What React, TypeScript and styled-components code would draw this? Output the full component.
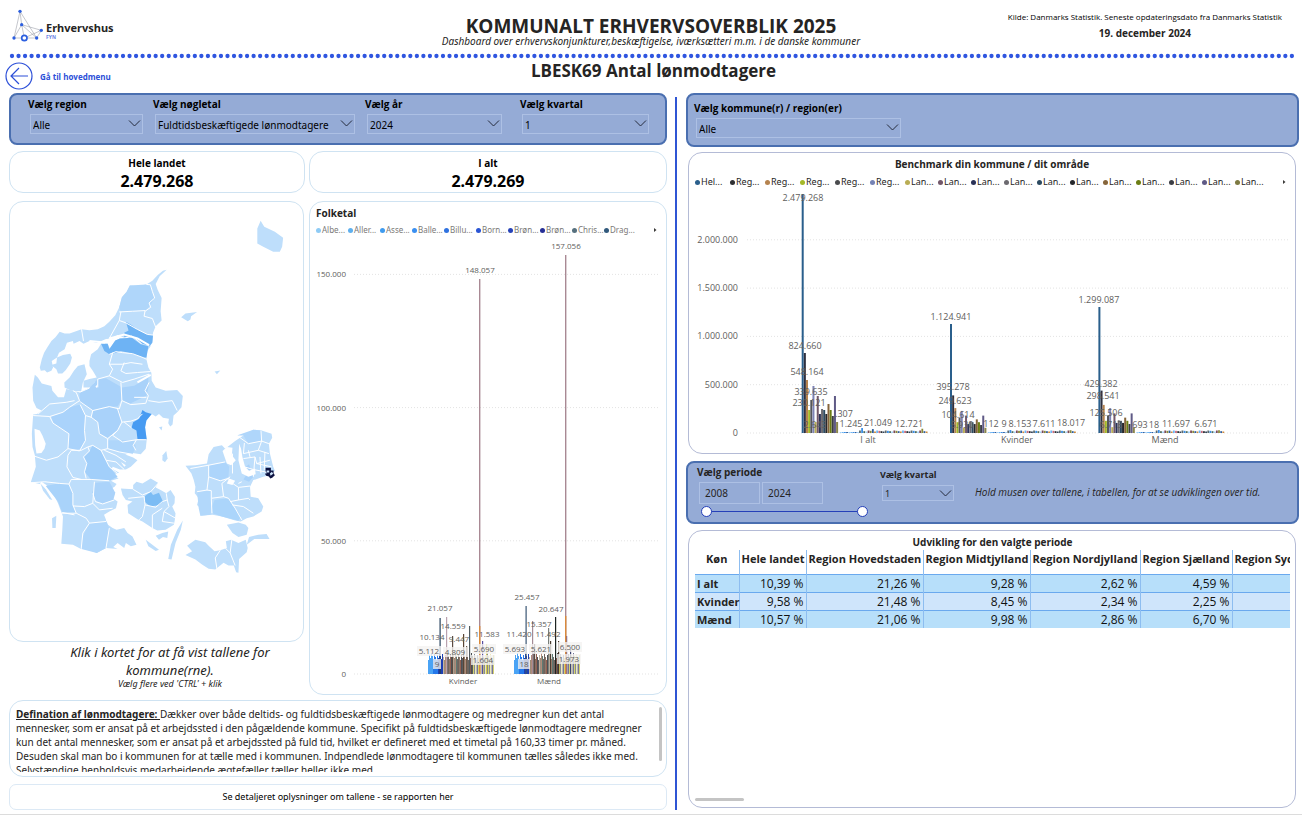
import React from "react";
import styled, { createGlobalStyle } from "styled-components";

const Global = createGlobalStyle`
  *, *::before, *::after { box-sizing: border-box; }
  body {
    margin: 0;
    background: #fff;
    color: #252423;
    font-family: "Noto Sans", "Open Sans", sans-serif;
    font-size: 10px;
  }
  h1, h2, h3, p { margin: 0; }
  button, input, select { font-family: inherit; color: inherit; }
`;

const Page = styled.div`
  min-width: 1100px;
  border-bottom: 1px solid #dcdcdc;
  padding-bottom: 4px;
`;

const Header = styled.header`
  display: grid;
  grid-template-columns: 1fr auto 1fr;
  height: 52px;
`;

const Brand = styled.div`
  display: flex;
  align-items: flex-start;
  gap: 2px;
  padding: 9px 0 0 12px;
`;

const BrandName = styled.div`
  padding-top: 12px;
  font-size: 11px;
  line-height: 14px;
  font-weight: 700;
`;

const BrandArea = styled.div`
  font-size: 5px;
  line-height: 5px;
  font-weight: 700;
  color: #6a83e6;
`;

const Headline = styled.div`
  padding-top: 16px;
  text-align: center;
`;

const Title = styled.h1`
  font-family: "Open Sans", sans-serif;
  font-size: 19px;
  line-height: 20px;
  font-weight: 700;
`;

const Tagline = styled.p`
  font-size: 10px;
  line-height: 10px;
  font-style: italic;
`;

const Source = styled.div`
  justify-self: end;
  padding: 10px 20px 0 0;
  text-align: center;
  font-family: "Open Sans", sans-serif;
  font-size: 8px;
  line-height: 14px;
  color: #000;
`;

const SourceDate = styled.div`
  font-size: 10px;
  line-height: 18px;
  font-weight: 700;
  color: #252423;
`;

const DotRule = styled.svg`
  display: block;
  width: 100%;
  height: 8px;
`;

const SubHeader = styled.div`
  display: grid;
  grid-template-columns: 1fr auto 1fr;
  height: 33px;
  padding: 1px 0 0 5px;
`;

const BackLink = styled.a`
  display: flex;
  align-items: center;
  gap: 7px;
  height: 30px;
  color: #2c4fd8;
  font-family: "Open Sans", sans-serif;
  font-size: 8px;
  font-weight: 700;
  text-decoration: none;
`;

const PageTitle = styled.h2`
  font-family: "Open Sans", sans-serif;
  font-size: 17px;
  line-height: 20px;
  font-weight: 700;
`;

const Main = styled.main`
  display: grid;
  grid-template-columns: minmax(0, 658fr) 2px minmax(0, 614fr);
  column-gap: 8px;
  padding: 0 3px 0 9px;
`;

const Divider = styled.div`
  margin-top: 4px;
  background: #2f55d4;
`;

const Column = styled.div`
  display: flex;
  flex-direction: column;
`;

const RightColumn = styled(Column)`
  padding-left: 1px;
`;

const FilterBar = styled.section<{ $height: number }>`
  display: flex;
  min-height: ${(p) => p.$height}px;
  border: 2px solid #4a6fb0;
  border-radius: 8px;
  background: #95abd6;
  color: #000;
`;

const Field = styled.div`
  display: flex;
  flex-direction: column;
  align-items: flex-start;
`;

const LeftFilters = styled(FilterBar)`
  display: grid;
  grid-template-columns: 125fr 212fr 155fr 129fr;
  padding: 1px 16px 0 17px;

  ${Field} { padding-right: 12px; }
  ${Field}:nth-child(3) { padding-right: 20px; }
  ${Field}:nth-child(4) { padding-right: 2px; }
`;

const Label = styled.label<{ $size?: number }>`
  font-family: "Open Sans", sans-serif;
  font-size: ${(p) => p.$size ?? 10}px;
  line-height: 16px;
  font-weight: 700;
`;

const SelectBox = styled.div<{ $width?: number; $small?: boolean }>`
  position: relative;
  width: ${(p) => (p.$width ? p.$width + "px" : "100%")};
  height: ${(p) => (p.$small ? 16 : 20)}px;
  margin: 2px 0 0 2px;
  border: 1px solid #adc0e4;

  svg {
    position: absolute;
    right: 1px;
    top: ${(p) => (p.$small ? 3 : 4)}px;
    pointer-events: none;
  }
`;

const Select = styled.select<{ $small?: boolean }>`
  display: block;
  width: 100%;
  height: 100%;
  padding: 1px 15px 0 2px;
  border: 0;
  appearance: none;
  background: transparent;
  font-size: ${(p) => (p.$small ? 9 : 10)}px;
`;

const Card = styled.section<{ $tone?: string }>`
  border: 1px solid ${(p) => p.$tone ?? "#cfe3f2"};
  border-radius: 14px;
  background: #fff;
`;

const KpiRow = styled.div`
  display: grid;
  grid-template-columns: 296fr 358fr;
  gap: 4px;
  margin-top: 6px;
`;

const Kpi = styled(Card)`
  height: 42px;
  padding-top: 4px;
  text-align: center;
  color: #000;
`;

const KpiName = styled.h3`
  font-family: "Open Sans", sans-serif;
  font-size: 10px;
  line-height: 15px;
  font-weight: 700;
`;

const KpiValue = styled.div`
  font-size: 16px;
  line-height: 20px;
  font-weight: 700;
`;

const Visuals = styled.div`
  display: grid;
  grid-template-columns: 296fr 358fr;
  gap: 4px;
  margin-top: 8px;
`;

const MapCard = styled(Card)`
  height: 441px;
  margin-right: 1px;
  overflow: hidden;

  svg { display: block; width: 100%; }
`;

const MapHint = styled.p`
  padding: 1px 0 0 26px;
  text-align: center;
  font-size: 13px;
  line-height: 18px;
  font-style: italic;

  small {
    display: block;
    font-size: 9px;
    line-height: 9px;
  }
`;

const ChartCard = styled(Card)`
  overflow: hidden;

  & > svg { display: block; width: 100%; }
`;

const ChartTitle = styled.h3<{ $center?: boolean }>`
  padding: ${(p) => (p.$center ? "3px 0 0" : "3px 0 0 6px")};
  text-align: ${(p) => (p.$center ? "center" : "left")};
  font-family: "Open Sans", sans-serif;
  font-size: 10px;
  line-height: 16px;
  font-weight: 700;
`;

const Legend = styled.ul<{ $tone: string; $size: number }>`
  display: flex;
  margin: 0;
  padding: 1px 8px 0 6px;
  list-style: none;
  color: ${(p) => p.$tone};
  font-size: ${(p) => p.$size}px;
  line-height: 16px;
`;

const LegendItem = styled.li<{ $width: number }>`
  display: flex;
  align-items: center;
  gap: 1px;
  width: ${(p) => p.$width}px;
  white-space: nowrap;
`;

const Dot = styled.span<{ $color: string }>`
  flex: none;
  width: 5px;
  height: 5px;
  border-radius: 50%;
  background: ${(p) => p.$color};
`;

const LegendNext = styled.button`
  display: flex;
  align-items: center;
  margin-left: auto;
  padding: 0;
  border: 0;
  background: none;
`;

const Definition = styled(Card)`
  height: 77px;
  margin-top: 5px;
  padding: 6px 4px 4px 6px;
`;

const DefinitionScroll = styled.div`
  display: flex;
  height: 65px;
  overflow: hidden;
  font-size: 10px;
  line-height: 14px;

  p { flex: 1; }
`;

const ScrollThumb = styled.div`
  flex: none;
  width: 3px;
  height: 54px;
  border-radius: 2px;
  background: #c4c4c4;
`;

const ReportLink = styled.a`
  display: block;
  margin-top: 7px;
  border: 1px solid #dce9f5;
  border-radius: 7px;
  text-align: center;
  font-size: 9px;
  line-height: 24px;
  color: #000;
  text-decoration: none;
`;

const RightFilter = styled(FilterBar)`
  padding: 5px 6px;
`;

const BenchmarkCard = styled(ChartCard)`
  margin: 5px 3px 0 2px;

  ${Legend} { padding-top: 2px; }
`;

const PeriodFilter = styled(FilterBar)`
  margin-top: 7px;
  padding: 1px 9px;
  color: #252423;
`;

const PeriodField = styled(Field)`
  width: 183px;
`;

const YearRow = styled.div`
  display: flex;
  gap: 2px;
  margin: 2px 0 0 2px;
`;

const YearInput = styled.input`
  width: 61px;
  height: 22px;
  padding: 0 5px;
  border: 1px solid #adc0e4;
  background: transparent;
  font-size: 10px;
`;

const SliderTrack = styled.div`
  position: relative;
  width: 170px;
  height: 14px;
  background: linear-gradient(#2540b8, #2540b8) 6px 7px / 156px 1px no-repeat;
`;

const SliderInput = styled.input`
  position: absolute;
  left: 4px;
  top: 2px;
  width: 167px;
  height: 11px;
  margin: 0;
  appearance: none;
  background: transparent;
  pointer-events: none;

  &::-webkit-slider-thumb {
    appearance: none;
    width: 11px;
    height: 11px;
    border: 1px solid #2540b8;
    border-radius: 50%;
    background: #fff;
    pointer-events: auto;
  }
`;

const QuarterField = styled(Field)`
  width: 95px;
  padding-top: 3px;
`;

const PeriodHint = styled.p`
  padding-top: 20px;
  font-family: "Open Sans", sans-serif;
  font-size: 10px;
  line-height: 16px;
  font-style: italic;
`;

const TableCard = styled(ChartCard)`
  flex: 1;
  display: flex;
  flex-direction: column;
  margin: 6px 3px 2px 2px;
  padding: 0 5px 6px 6px;
`;

const TableScroll = styled.div`
  flex: 1;
  overflow: hidden;
`;

const Table = styled.table`
  border-collapse: collapse;
  table-layout: fixed;
  width: 649px;
  font-family: "Open Sans", sans-serif;
  font-size: 12px;

  th, td {
    padding: 0 2px;
    white-space: nowrap;
    border-left: 1px solid #8dbdf0;
  }
  th:first-child { border-left: 0; }
  thead th {
    height: 24px;
    padding-bottom: 6px;
    font-size: 11px;
  }
  tbody tr { height: 18px; background: #b7dffa; border-top: 1px solid #6aa9ee; }
  tbody tr:nth-child(2) { background: #cfe5fb; }
  tbody th { text-align: left; font-size: 11px; }
  tbody td { text-align: right; color: #111; }
`;

const ScrollBar = styled.div`
  width: 49px;
  height: 3px;
  border-radius: 2px;
  background: #c4c4c4;
`;

const Chevron = () => (
  <svg width="13" height="9" viewBox="0 0 13 9" fill="none" stroke="#252b3d">
    <path d="M1 1.5 6.500 7 12 1.500" />
  </svg>
);

const NextArrow = () => (
  <svg width="4" height="6" viewBox="0 0 4 6">
    <path d="M0 1 2.500 3 0 5z" fill="#3b3a39" />
  </svg>
);

type PickerProps = { id: string; label: string; value: string; width?: number; small?: boolean };

const Picker = ({ id, label, value, width, small }: PickerProps) => (
  <>
    <Label htmlFor={id} $size={small ? 9 : 10}>{label}</Label>
    <SelectBox $width={width} $small={small}>
      <Select id={id} defaultValue={value} $small={small}>
        <option>{value}</option>
      </Select>
      <Chevron />
    </SelectBox>
  </>
);

const Logo = () => (
  <svg width="32" height="34" viewBox="0 0 96 102">
    <g fill="none" stroke="#8a8f9a" strokeWidth="1.500">
      <path d="M24 7 6 87H74L24 7 29 47 6 87M29 47 74 87 88 64 29 47 37 87 88 64" />
    </g>
    <g fill="#2c5fe0">
      <circle cx="24" cy="7" r="5" />
      <circle cx="29" cy="47" r="5" />
      <circle cx="6" cy="87" r="5" />
      <circle cx="74" cy="87" r="5" />
      <circle cx="88" cy="64" r="5" />
    </g>
    <circle cx="37" cy="87" r="8" fill="#fff" stroke="#2c5fe0" strokeWidth="5" />
  </svg>
);

const BackIcon = () => (
  <svg width="28" height="28" viewBox="0 0 28 28" fill="none" stroke="#2c4fd8" strokeWidth="1.200">
    <circle cx="14" cy="14" r="13" />
    <path d="M23 14H6M14 6 6 14l8 8" />
  </svg>
);

/* ---------- Map of Denmark ---------- */

const land = [
  "M473 205 462 208 447 220 430 238 412 249 385 254 362 252 352 272 338 288 330 318 318 342 300 362 285 375 265 384 240 387 216 384 195 392 180 397 165 397 150 392 138 408 125 420 112 440 103 455 96 475 90 500 93 510 105 508 112 515 125 510 130 500 126 480 142 470 148 455 165 445 172 425 190 420 192 428 210 420 222 428 240 420 262 426 290 414 310 412 325 402 345 410 368 403 385 415 400 430 425 434 430 420 432 395 440 375 458 358 455 330 458 290 446 265 440 248 452 224Z",
  "M275 428 295 428 302 444 318 418 332 412 350 412 368 405 395 428 425 435 415 450 412 475 418 500 427 516 428 540 440 560 470 570 505 568 522 586 518 620 505 635 494 645 491 672 484 678 478 668 480 655 462 652 450 640 440 648 428 640 412 660 408 680 413 718 410 745 395 762 370 758 348 763 372 772 385 780 365 800 350 808 332 808 310 800 308 806 330 818 310 823 328 835 305 842 322 852 316 860 298 870 318 878 310 895 325 905 320 925 300 935 284 945 296 975 310 985 322 990 345 985 355 1000 370 1010 382 1035 365 1040 350 1030 345 1045 325 1030 312 1042 325 1048 290 1045 262 1060 240 1050 213 1047 190 1035 155 1032 158 990 160 950 145 910 130 880 110 855 95 845 90 852 63 846 78 800 75 765 68 740 66 700 70 642 82 640 95 630 80 622 70 600 68 560 75 522 84 530 96 548 125 556 128 570 145 590 163 590 170 565 190 570 210 575 240 562 265 568 268 548 255 545 245 560 222 560 222 540 240 535 262 530 250 510 240 495 240 480 245 460 265 445Z",
  "M164 545 180 530 193 510 205 495 225 490 232 520 220 545 215 572 185 570 165 560Z",
  "M124 492 140 488 142 470 160 462 182 458 187 470 182 488 168 508 158 518 145 518 140 505Z",
  "M335 865 372 868 372 855 382 845 400 850 425 835 447 848 440 862 455 870 472 880 485 870 498 890 497 910 490 920 500 940 498 960 495 975 470 990 445 992 430 985 400 965 385 958 357 940 355 915 370 905 350 900 340 885Z",
  "M522 962 516 990 500 1030 488 1080 478 1078 486 1035 505 990Z",
  "M410 1020 430 1035 450 1050 440 1054 418 1040Z",
  "M440 1008 460 1000 478 995 475 1015 462 1012 450 1020Z",
  "M461 765 472 752 476 775 468 786 460 780Z",
  "M530 797 560 795 595 790 600 762 615 740 640 735 650 745 680 722 705 705 735 688 760 690 790 700 792 712 782 730 785 760 795 800 800 812 785 825 765 830 735 840 725 860 727 890 750 895 765 920 760 935 735 950 715 955 697 965 680 962 640 950 612 945 575 948 580 930 565 915 570 895 558 880 560 860 555 840 548 820Z",
  "M655 975 690 968 712 975 720 985 715 1005 690 1012 672 1000Z",
  "M530 1066 550 1055 535 1038 560 1020 590 1028 600 1038 618 1055 635 1052 655 1045 652 1025 668 1020 690 1030 712 1020 718 1045 715 1058 692 1078 690 1120 683 1118 676 1098 660 1098 645 1090 620 1110 600 1108 580 1095 560 1080Z",
  "M715 1035 722 1012 750 1005 775 1003 784 1018 760 1018 738 1018Z",
  "M757 57 768 75 800 90 825 108 822 135 815 150 795 150 765 135 747 125 747 80Z",
  "M517 348 530 337 565 332 547 345 545 355 537 360Z",
  "M618 512 635 509 625 520Z",
  "M127 955 140 948 138 985 128 985Z",
  "M92 850 108 868 128 900 120 898 100 872Z",
  "M450 680 460 678 458 690Z",
];

const fills: [string, string][] = [
  ["#afd6fa", "M362 252 412 249 424 250 430 270 437 290 425 310 408 330 370 330 335 332 330 318 338 288 352 272Z"],
  ["#6eb3f4", "M350 362 368 372 385 385 415 400 432 402 430 425 422 434 400 428 382 412 368 403 345 408 345 395 358 388Z"],
  ["#6eb3f4", "M275 428 295 428 300 444 318 418 332 412 368 410 395 430 418 436 412 470 402 470 370 458 335 450 320 455 300 460 285 450Z"],
  ["#a9d2fa", "M210 575 240 562 265 535 290 532 335 558 338 595 325 618 285 620 250 630 210 605Z"],
  ["#a9d2fa", "M338 560 375 555 418 530 418 560 412 585 360 610 338 600Z"],
  ["#aad3fb", "M125 648 160 635 180 620 212 612 228 645 225 690 228 720 210 752 175 745 178 700 130 668Z"],
  ["#a9d2fa", "M250 630 300 618 330 625 337 660 325 690 295 712 270 700 265 665 245 650Z"],
  ["#479bf2", "M400 628 410 635 428 640 412 660 408 680 413 718 385 716 382 690 367 682 372 665 390 655Z"],
  ["#afd6fb", "M295 720 340 720 375 722 380 740 370 762 330 755 295 745Z"],
  ["#a2cffa", "M250 735 275 750 290 780 300 800 325 830 300 842 245 838 225 815 232 790 222 770 240 752Z"],
  ["#a9d3fa", "M108 858 145 850 178 852 190 880 190 915 200 940 158 938 145 905Z"],
  ["#abd3fa", "M258 848 300 845 318 878 312 900 280 912 255 900 248 880Z"],
  ["#b1d7fb", "M240 970 290 965 300 985 290 1045 262 1060 213 1047 220 1010Z"],
  ["#7cbcf4", "M408 888 425 875 432 885 450 878 462 905 450 915 425 920 405 905Z"],
  ["#b2d8fb", "M565 875 608 872 610 925 605 945 575 948 570 925Z"],
  ["#abd5fb", "M618 900 660 895 680 925 698 950 690 963 640 950 612 940 608 925Z"],
  ["#add5fb", "M600 795 650 785 662 800 660 830 635 842 600 830Z"],
  ["#a9d2fa", "M712 800 722 792 735 830 722 845 705 838 715 822Z"],
  ["#afd6fb", "M685 705 735 688 760 690 758 722 720 730 705 705Z"],
];

const borders =
  "M412 249 424 250 430 270 437 290 420 305 425 318 408 330M330 332 370 330 408 328 405 345 430 352 440 378M335 332 330 358 350 365 385 385 415 400 432 402M216 384 222 420M330 358 300 412" +
  "M300 460 320 452 340 455 370 458 402 470 412 475M310 455 300 490 310 505 300 525M300 490 340 490 365 485 400 490M345 485 335 510 350 518 385 515 425 512M300 525 265 535 265 560M300 525 340 545 375 535 420 520M335 545 338 600 365 612 410 608 418 585 408 570 420 545M375 590 412 590M418 600 450 605 490 600 505 630" +
  "M190 570 200 575 210 600 180 620 160 635 120 648 70 645M210 575 240 562M210 602 250 630 300 618 330 625 338 600M212 612 228 645 225 690 228 720 210 752 175 745 178 700 130 668 120 648M85 640 120 610 170 605 195 600" +
  "M228 645 245 650 265 665 270 700 295 715M250 630 245 650M325 625 338 665 365 662 385 655 400 640M338 665 325 690 295 715 295 745 330 755 370 762M367 682 345 665M325 690 310 705 340 725 382 718 413 718M382 718 372 735 380 750" +
  "M66 765 110 780 145 770 175 745M175 765 185 750 215 750 235 740 250 735 275 750 295 745M175 765 172 800 190 832 215 838M235 740 240 752 222 770 232 790 225 815 230 835M275 750 290 780 320 785 345 808M285 750 320 765 350 785M290 780 300 800 325 820" +
  "M65 848 105 845 150 850 178 852 185 838 245 838 300 842M178 852 190 880 190 915 200 940 155 940M190 918 225 920 250 910 255 845M250 880 258 905 280 912 315 900M200 940 230 955 240 970 290 965 300 950M158 938 195 945M240 970 220 1000 215 1048M250 910 270 930 310 925" +
  "M372 868 400 885 425 875 447 850M357 895 405 890 408 915 440 922 460 905 475 900 472 880M475 900 480 920 465 935 500 955M408 915 400 950 390 960M460 925 430 945 430 985M465 935 460 965 495 970M300 985 290 1045" +
  "M545 805 600 795 600 830 595 870 565 875M600 795 650 785M600 830 635 842 660 835 665 845M665 830 640 850 645 890 608 895 608 872 595 870M608 895 610 940M645 890 660 895 680 925 700 960M665 845 690 862 690 900 665 905M690 862 725 858M690 900 720 895 725 900M672 915 705 920 735 940M672 760 672 820M690 850 700 845M685 705 720 730 760 722 782 730M758 690 760 722 750 750 782 760M708 728 705 760 750 750M705 775 740 770 745 790 785 780M740 770 735 830M745 790 790 800M755 770 758 820M770 755 768 810M708 800 735 808 785 818M720 750 725 770M670 1020 665 1060 680 1098M635 1052 620 1075 625 1108M650 1045 665 1060";

const fjords =
  "M74 685 90 690 98 705 108 730 104 745 95 758 80 760 76 735ZM642 752 655 740 672 742 670 765 682 780 668 795 655 790ZM692 730 698 745 702 770 710 800 722 812 740 805 742 822 720 830 700 820 690 780ZM655 850 662 835 680 842 672 855ZM335 785 350 795 345 800ZM265 550 258 558 262 562Z";

const DenmarkMap = () => (
  <svg viewBox="0 0 885 1320" role="img" aria-label="Kort over Danmarks kommuner">
    <g fill="#bedefb">
      {land.map((d) => <path key={d} d={d} />)}
    </g>
    {fills.map(([c, d]) => <path key={d} d={d} fill={c} />)}
    <path d={borders} fill="none" stroke="#fff" strokeWidth="3" strokeLinejoin="round" />
    <path d={fjords} fill="#fff" />
    <path d="M385 545 425 522M300 412 345 400 385 412 420 432M240 420 285 424 310 410" fill="none" stroke="#fff" strokeWidth="6" />
    <path d="M772 803h16v8h8v8l4 6-8 8-6 2-4-6-8-2-4-6 6-2-4-6z" fill="#0d1240" />
    <path d="M775 811h8v6h-8zM785 820l6-5 4 6-8 6z" fill="#cfe5fb" />
  </svg>
);

/* ---------- Charts ---------- */

const ChartText = styled.text<{ $anchor?: string; $size?: number }>`
  font-family: "Open Sans", sans-serif;
  font-size: ${(p) => p.$size ?? 9}px;
  fill: #605e5c;
  text-anchor: ${(p) => p.$anchor ?? "middle"};
`;

type Bar = { x: number; w: number; h: number; c: string };

const BarSet = ({ bars, base }: { bars: Bar[]; base: number }) => (
  <g>
    {bars.map((b, i) => (
      <rect key={i} x={b.x} y={base - b.h} width={b.w} height={b.h} fill={b.c} />
    ))}
  </g>
);

const P_BASE = 436;
const mixed = ["#6e645e", "#b08a78", "#5a5a5e", "#8d7668", "#5f7a72", "#c2b5a2", "#946052", "#6d6864", "#9b8b7b", "#4c5054"];

const populationBars = (start: number, male: boolean): Bar[] => {
  const bars: Bar[] = [];
  for (let i = 0; i < 66; i += 1) {
    const h = 14 + ((i * 37) % 8);
    let c = mixed[(i * 3) % mixed.length];
    if (i < 15) c = i < 5 ? "#4aa3f5" : i < 10 ? "#2478ea" : "#1c3fb4";
    if (i > 44) c = ["#c9c84a", "#6a6f78", "#e8e4a8", "#a5a5ac", "#55537a"][i % 5];
    bars.push({ x: start + i, w: i > 44 ? 0.8 : 1, h, c });
  }
  const peaks: [number, number, string][] = male
    ? [[11.5, 68, "#3a5674"], [18, 53, "#a48b96"], [20, 30, "#5b4a42"], [34, 46, "#7a7f7a"], [36, 33, "#4a3c30"], [41, 57, "#1d2422"], [52, 38, "#574fa0"], [56, 25, "#3c4470"], [44, 33, "#4a3326"]]
    : [[11.5, 56, "#24405c"], [18, 57, "#b9a2ae"], [24, 38, "#5b4a42"], [35, 40, "#5a4434"], [38, 28, "#6d5a4a"], [41, 48, "#4f5a5e"], [54, 33, "#574fa0"], [58, 30, "#d2c84a"]];
  peaks.forEach(([x, h, c]) => bars.push({ x: start + x, w: 1.2, h, c }));
  bars.push({ x: start + 51, w: 1.4, h: male ? 419 : 395, c: "#a98994" });
  bars.push({ x: start + 51, w: 1.4, h: male ? 58 : 48, c: "#d98a3c" });
  return bars;
};

const populationLabels: [number, number, string, boolean?][] = [
  [170, 35, "148.057"], [256, 11, "157.056"],
  [130, 373, "21.057"], [143, 391, "14.559"], [122, 402, "10.134"], [149, 404, "9.447"], [177, 399, "11.583"],
  [119, 416, "5.112", true], [145, 417, "4.809", true], [174, 414, "5.690", true], [173, 425, "1.604", true], [127, 429, "9", true],
  [217, 362, "25.457"], [241, 374, "20.647"], [229, 389, "15.357"], [209, 399, "11.420"], [238, 399, "11.492"],
  [205, 414, "5.693", true], [231, 414, "5.621", true], [260, 412, "6.500", true], [259, 424, "1.973", true], [214, 429, "18", true],
];

const PopulationChart = () => (
  <svg viewBox="0 0 356 456" role="img" aria-label="Folketal">
    {[0, 1, 2, 3].map((i) => (
      <g key={i}>
        <line x1="44" x2="348" y1={P_BASE - i * 133.2} y2={P_BASE - i * 133.2} stroke="#e3e3e3" strokeDasharray="1 2" />
        <ChartText $size={8} $anchor="end" x="36" y={P_BASE - i * 133.2 + 3}>{["0", "50.000", "100.000", "150.000"][i]}</ChartText>
      </g>
    ))}
    <BarSet base={P_BASE} bars={populationBars(118, false)} />
    <BarSet base={P_BASE} bars={populationBars(204, true)} />
    {populationLabels.map(([x, y, t, boxed]) => (
      <g key={t}>
        {boxed && <rect x={x - t.length * 2 - 2} y={y - 8} width={t.length * 4 + 4} height="10" fill="#f4f2f1" opacity="0.78" />}
        <ChartText $size={8} x={x} y={y}>{t}</ChartText>
      </g>
    ))}
    <ChartText $size={8} x="153" y="446">Kvinder</ChartText>
    <ChartText $size={8} x="239" y="446">Mænd</ChartText>
  </svg>
);

const B_BASE = 243;
const regionBars: [number, string][] = [
  [240, "#2a5f8c"], [80, "#2e2f3e"], [53, "#b5834f"], [23, "#a4b827"], [33, "#55565a"], [47, "#7d83b5"],
  [11, "#b9ad54"], [37, "#72586a"], [19, "#2a3157"], [24, "#6c6a70"], [23, "#2c4a60"], [19, "#25272c"],
  [29, "#86653a"], [23, "#6b7d14"], [17, "#3c3e44"], [37, "#5f5a86"], [11, "#8a864a"],
];
const smallColors = ["#9fd0fa", "#6ab4f4", "#3a8ee6", "#2d5fa0", "#33455c", "#7d4b58", "#c96a7c", "#4f6d5e", "#cf8a3c", "#5c6a6e", "#8a8a3a", "#2b2f33"];

const benchmarkBars = (start: number, share: number, first: number): Bar[] => {
  const bars = regionBars.map(([h, c], i) => ({ x: start + i * 2.15, w: 2, h: i === 0 ? first : h * share, c }));
  for (let i = 0; i < 41; i += 1) {
    const peak = i === 10 ? 4 : i === 15 ? 3 : i === 38 ? 3 : 0;
    const h = (i < 9 ? 1 : 1.5 + ((i * 7) % 4) / 3) + peak * (share > 0.9 ? 0.7 : 0.2);
    bars.push({ x: start + 38 + i * 2.15, w: 1.8, h, c: i < 9 ? smallColors[i % 4] : smallColors[(i * 5) % 12] });
  }
  return bars;
};

const benchmarkLabels: [number, number, string][] = [
  [114, 11, "2.479.268"], [116, 159, "824.660"], [118, 185, "548.164"], [122, 205, "339.635"], [120, 216, "230.121"],
  [126, 238, "2.643"], [155, 227, ".307"], [162, 237, "1.245"], [189, 236, "21.049"], [220, 237, "12.721"],
  [262, 130, "1.124.941"], [264, 200, "395.278"], [266, 214, "249.623"], [269, 228, "104.614"], [273, 238, "5.930"],
  [302, 237, "112"], [315, 237, "9"], [331, 237, "8.153"], [355, 237, "7.611"], [382, 236, "18.017"],
  [410, 113, "1.299.087"], [412, 197, "429.382"], [414, 209, "298.541"], [417, 226, "125.506"], [422, 238, "6.713"],
  [451, 238, "693"], [465, 238, "18"], [487, 237, "11.697"], [517, 237, "6.671"],
];

const BenchmarkChart = () => (
  <svg viewBox="0 0 606 263" role="img" aria-label="Benchmark din kommune / dit område">
    {["0", "500.000", "1.000.000", "1.500.000", "2.000.000"].map((t, i) => (
      <g key={t}>
        <line x1="58" x2="600" y1={B_BASE - i * 48.3} y2={B_BASE - i * 48.3} stroke="#e3e3e3" strokeDasharray="1 2" />
        <ChartText $anchor="end" x="49" y={B_BASE - i * 48.3 + 3}>{t}</ChartText>
      </g>
    ))}
    <BarSet base={B_BASE} bars={benchmarkBars(112.7, 1, 239)} />
    <BarSet base={B_BASE} bars={benchmarkBars(261, 0.47, 109)} />
    <BarSet base={B_BASE} bars={benchmarkBars(409.4, 0.53, 126)} />
    {benchmarkLabels.map(([x, y, t]) => <ChartText key={x} x={x} y={y}>{t}</ChartText>)}
    <ChartText x="179" y="253">I alt</ChartText>
    <ChartText x="328" y="253">Kvinder</ChartText>
    <ChartText x="476" y="253">Mænd</ChartText>
  </svg>
);

const municipalities: [string, string][] = [
  ["Albe...", "#8ecbf5"], ["Aller...", "#5fb0ee"], ["Asse...", "#3f9bef"], ["Balle...", "#3a8ff0"], ["Billu...", "#2f72e0"],
  ["Born...", "#2a55d4"], ["Brøn...", "#2743b8"], ["Brøn...", "#262f96"], ["Chris...", "#56707e"], ["Drag...", "#31597c"],
];

const areas: [string, string][] = [
  ["Hel...", "#2a5f8c"], ["Reg...", "#2e2f33"], ["Reg...", "#b5834f"], ["Reg...", "#a4b827"], ["Reg...", "#4a4b4e"], ["Reg...", "#7583b5"],
  ["Lan...", "#b9ad54"], ["Lan...", "#72586a"], ["Lan...", "#2a3157"], ["Lan...", "#6c6a70"], ["Lan...", "#2c4a60"], ["Lan...", "#25272c"],
  ["Lan...", "#86653a"], ["Lan...", "#6b7d14"], ["Lan...", "#3c3e44"], ["Lan...", "#5f5a86"], ["Lan...", "#7d7a42"],
];

const columns: [string, number][] = [
  ["Køn", 44], ["Hele landet", 67], ["Region Hovedstaden", 117], ["Region Midtjylland", 107],
  ["Region Nordjylland", 110], ["Region Sjælland", 92], ["Region Syddanmark", 112],
];

const rows = [
  ["I alt", "10,39 %", "21,26 %", "9,28 %", "2,62 %", "4,59 %", ""],
  ["Kvinder", "9,58 %", "21,48 %", "8,45 %", "2,34 %", "2,25 %", ""],
  ["Mænd", "10,57 %", "21,06 %", "9,98 %", "2,86 %", "6,70 %", ""],
];

export default function App() {
  return (
    <Page>
      <Global />
      <Header>
        <Brand>
          <Logo />
          <BrandName>
            Erhvervshus
            <BrandArea>FYN</BrandArea>
          </BrandName>
        </Brand>
        <Headline>
          <Title>KOMMUNALT ERHVERVSOVERBLIK 2025</Title>
          <Tagline>Dashboard over erhvervskonjunkturer,beskæftigelse, iværksætteri m.m. i de danske kommuner</Tagline>
        </Headline>
        <Source>
          Kilde: Danmarks Statistik. Seneste opdateringsdato fra Danmarks Statistik
          <SourceDate>19. december 2024</SourceDate>
        </Source>
      </Header>
      <DotRule aria-hidden="true">
        <line x1="12" x2="99.700%" y1="4" y2="4" stroke="#2f55e0" strokeWidth="4.300" strokeLinecap="round" strokeDasharray="0 6.530" />
      </DotRule>
      <SubHeader>
        <BackLink href="#hovedmenu">
          <BackIcon />
          Gå til hovedmenu
        </BackLink>
        <PageTitle>LBESK69 Antal lønmodtagere</PageTitle>
      </SubHeader>

      <Main>
        <Column>
          <LeftFilters $height={52}>
            <Field><Picker id="region" label="Vælg region" value="Alle" /></Field>
            <Field><Picker id="noegletal" label="Vælg nøgletal" value="Fuldtidsbeskæftigede lønmodtagere" /></Field>
            <Field><Picker id="aar" label="Vælg år" value="2024" /></Field>
            <Field><Picker id="kvartal" label="Vælg kvartal" value="1" /></Field>
          </LeftFilters>
          <KpiRow>
            <Kpi><KpiName>Hele landet</KpiName><KpiValue>2.479.268</KpiValue></Kpi>
            <Kpi><KpiName>I alt</KpiName><KpiValue>2.479.269</KpiValue></Kpi>
          </KpiRow>
          <Visuals>
            <div>
              <MapCard><DenmarkMap /></MapCard>
              <MapHint>
                Klik i kortet for at få vist tallene for<br />kommune(rne).
                <small>Vælg flere ved 'CTRL' + klik</small>
              </MapHint>
            </div>
            <ChartCard>
              <ChartTitle>Folketal</ChartTitle>
              <Legend $tone="#7b7977" $size={8}>
                {municipalities.map(([name, color], i) => (
                  <LegendItem key={i} $width={32}><Dot $color={color} />{name}</LegendItem>
                ))}
                <LegendNext aria-label="Næste"><NextArrow /></LegendNext>
              </Legend>
              <PopulationChart />
            </ChartCard>
          </Visuals>
          <Definition>
            <DefinitionScroll>
              <p>
                <b><u>Defination af lønmodtagere: </u></b>
                Dækker over både deltids- og fuldtidsbeskæftigede lønmodtagere og medregner kun det antal mennesker, som er ansat på et arbejdssted i den pågældende kommune. Specifikt på fuldtidsbeskæftigede lønmodtagere medregner kun det antal mennesker, som er ansat på et arbejdssted på fuld tid, hvilket er defineret med et timetal på 160,33 timer pr. måned. Desuden skal man bo i kommunen for at tælle med i kommunen. Indpendlede lønmodtagere til kommunen tælles således ikke med. Selvstændige henholdsvis medarbejdende ægtefæller tæller heller ikke med.
              </p>
              <ScrollThumb />
            </DefinitionScroll>
          </Definition>
          <ReportLink href="#rapport">Se detaljeret oplysninger om tallene - se rapporten her</ReportLink>
        </Column>

        <Divider />

        <RightColumn>
          <RightFilter $height={54}>
            <Field><Picker id="kommune" label="Vælg kommune(r) / region(er)" value="Alle" width={205} /></Field>
          </RightFilter>
          <BenchmarkCard $tone="#b4bbd6">
            <ChartTitle $center>Benchmark din kommune / dit område</ChartTitle>
            <Legend $tone="#252423" $size={9}>
              {areas.map(([name, color], i) => (
                <LegendItem key={i} $width={i < 6 ? 35 : 33}><Dot $color={color} />{name}</LegendItem>
              ))}
              <LegendNext aria-label="Næste"><NextArrow /></LegendNext>
            </Legend>
            <BenchmarkChart />
          </BenchmarkCard>
          <PeriodFilter $height={63}>
            <PeriodField>
              <Label htmlFor="fra">Vælg periode</Label>
              <YearRow>
                <YearInput id="fra" defaultValue="2008" />
                <YearInput aria-label="Til år" defaultValue="2024" />
              </YearRow>
              <SliderTrack>
                <SliderInput type="range" aria-label="Periode fra" min="2008" max="2024" defaultValue="2008" />
                <SliderInput type="range" aria-label="Periode til" min="2008" max="2024" defaultValue="2024" />
              </SliderTrack>
            </PeriodField>
            <QuarterField><Picker id="kvartal2" label="Vælg kvartal" value="1" width={72} small /></QuarterField>
            <PeriodHint>Hold musen over tallene, i tabellen, for at se udviklingen over tid.</PeriodHint>
          </PeriodFilter>
          <TableCard $tone="#b4bbd6">
            <ChartTitle $center>Udvikling for den valgte periode</ChartTitle>
            <TableScroll>
              <Table>
                <colgroup>{columns.map(([c, w]) => <col key={c} width={w} />)}</colgroup>
                <thead><tr>{columns.map(([c]) => <th key={c} scope="col">{c}</th>)}</tr></thead>
                <tbody>
                  {rows.map((r) => (
                    <tr key={r[0]}>
                      <th scope="row">{r[0]}</th>
                      {r.slice(1).map((v, i) => <td key={i}>{v}</td>)}
                    </tr>
                  ))}
                </tbody>
              </Table>
            </TableScroll>
            <ScrollBar />
          </TableCard>
        </RightColumn>
      </Main>
    </Page>
  );
}
